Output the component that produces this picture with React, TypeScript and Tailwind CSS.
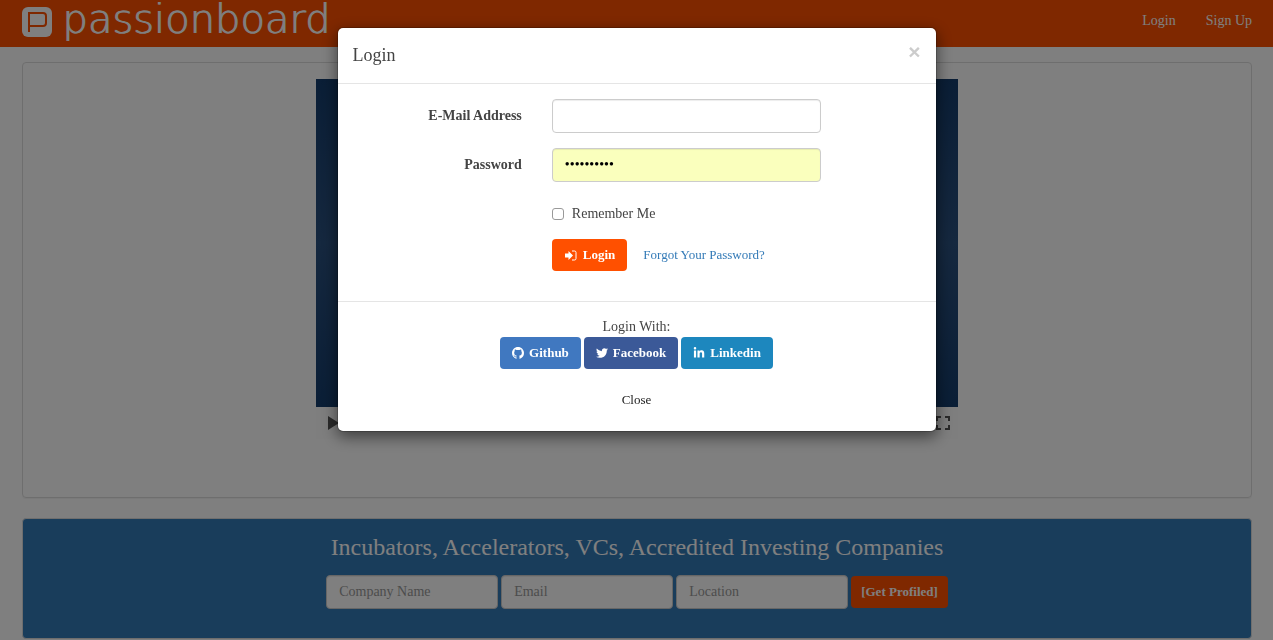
import { useState } from "react";
import { BsGithub } from "react-icons/bs";
import { FaTwitter, FaLinkedinIn } from "react-icons/fa";

const socials = [
  { name: "Github", color: "bg-[#4078c0]", icon: BsGithub },
  { name: "Facebook", color: "bg-[#3b5998]", icon: FaTwitter },
  { name: "Linkedin", color: "bg-[#1d87be]", icon: FaLinkedinIn },
];

const profileFields = ["Company Name", "Email", "Location"];

const button = "h-8 rounded-sm text-[13px] font-bold text-white";
const field = "h-[34px] rounded border border-[#ccc] px-3 text-sm shadow-[inset_0_1px_1px_rgba(0,0,0,0.075)]";

function Logo() {
  return (
    <a href="#" className="flex items-start gap-[10px] text-white">
      <svg className="mt-[7px] size-[30px]" viewBox="0 0 30 30" aria-hidden="true">
        <rect width="30" height="30" rx="6" fill="currentColor" />
        <path d="M7 25V6h14q3 0 3 3v7q0 3-3 3H7" fill="none" stroke="#ff5000" strokeWidth="2" />
      </svg>
      <span className="font-['DejaVu_Sans',sans-serif] text-[40px] font-extralight leading-[38px] [text-shadow:1px_0_0_currentColor]">
        passionboard
      </span>
    </a>
  );
}

function Navbar() {
  return (
    <nav className="flex h-[47px] items-start justify-between bg-[#ff5000] pr-[21px] pl-[22px]">
      <Logo />
      <div className="flex gap-[30px] py-[11px] text-sm text-white">
        <a href="#login">Login</a>
        <a href="#signup">Sign Up</a>
      </div>
    </nav>
  );
}

function Video() {
  return (
    <div className="mx-auto max-w-[642px]">
      <div className="h-[328px] bg-linear-to-b from-[#143c6c] via-[#2a507e] to-[#143c6c]" />
      <div className="flex h-8 items-center justify-between bg-[#fcfcfc] px-2 text-[#555]">
        <button type="button" aria-label="Play" className="px-1">
          <svg className="h-[14px] w-[11px]" viewBox="0 0 11 14" fill="currentColor">
            <path d="M0 0l11 7-11 7z" />
          </svg>
        </button>
        <button type="button" aria-label="Fullscreen">
          <svg className="size-[14px]" viewBox="0 0 14 14" fill="none" stroke="currentColor" strokeWidth="2">
            <path d="M1 5V1h4M9 1h4v4M13 9v4H9M5 13H1V9" />
          </svg>
        </button>
      </div>
    </div>
  );
}

function InvestorForm() {
  return (
    <section className="h-[121px] rounded border border-[#ddd] bg-[#337ab7] px-4 pt-[14px] text-center">
      <h3 className="mb-[14px] text-2xl leading-7 text-white">
        Incubators, Accelerators, VCs, Accredited Investing Companies
      </h3>
      <form className="flex items-center justify-center gap-[3px]" onSubmit={(e) => e.preventDefault()}>
        {profileFields.map((name) => (
          <input
            key={name}
            aria-label={name}
            placeholder={name}
            className={`${field} w-[172px] bg-white placeholder:text-[#999]`}
          />
        ))}
        <button className={`${button} bg-[#ff5000] px-[10px]`}>[Get Profiled]</button>
      </form>
    </section>
  );
}

function LoginModal({ onClose }: { onClose: () => void }) {
  return (
    <div className="fixed inset-0 overflow-y-auto bg-black/50">
      <div
        role="dialog"
        aria-labelledby="login-title"
        className="mx-auto mt-[27px] max-w-[600px] rounded-md border border-black/20 bg-white bg-clip-padding shadow-[0_5px_15px_rgba(0,0,0,0.5)]"
      >
        <header className="flex items-start justify-between border-b border-[#e5e5e5] p-[15px]">
          <h4 id="login-title" className="text-lg leading-[25px]">Login</h4>
          <button
            type="button"
            aria-label="Close dialog"
            onClick={onClose}
            className="font-['Liberation_Sans',sans-serif] text-[21px] font-bold leading-[18px] text-[#ccc]"
          >
            ×
          </button>
        </header>

        <form className="space-y-[15px] pt-[15px] pb-[30px]" onSubmit={(e) => e.preventDefault()}>
          <div className="flex">
            <label htmlFor="email" className="w-1/3 px-[15px] pt-[7px] text-right font-bold">E-Mail Address</label>
            <div className="w-1/2 px-[15px]">
              <input id="email" type="email" className={`${field} block w-full bg-white`} />
            </div>
          </div>
          <div className="flex">
            <label htmlFor="password" className="w-1/3 px-[15px] pt-[7px] text-right font-bold">Password</label>
            <div className="w-1/2 px-[15px]">
              <input
                id="password"
                type="password"
                defaultValue="passionate"
                className={`${field} block w-full bg-[#faffbd] text-black`}
              />
            </div>
          </div>
          <div className="ml-[33.333%] px-[15px] pt-[7px]">
            <label className="flex items-center gap-2">
              <input type="checkbox" className="size-3 appearance-none rounded-[3px] border border-[#999] bg-white checked:appearance-auto" />
              Remember Me
            </label>
          </div>
          <div className="ml-[33.333%] flex items-center gap-4 px-[15px]">
            <button className={`${button} flex items-center gap-[6px] bg-[#ff5000] px-3`}>
              <svg className="size-[13px]" viewBox="0 0 13 13" aria-hidden="true">
                <path d="M1 4.500h3.500V2L9 6.500 4.500 11V8.500H1z" fill="currentColor" />
                <path d="M8 2h2.500q1.500 0 1.500 1.500v6q0 1.500-1.500 1.500H8" fill="none" stroke="currentColor" />
              </svg>
              Login
            </button>
            <a href="#forgot" className="text-[13px] text-[#337ab7]">Forgot Your Password?</a>
          </div>
        </form>

        <footer className="border-t border-[#e5e5e5] p-[15px] text-center">
          <p>Login With:</p>
          <div className="mb-[15px] flex justify-center gap-[3px]">
            {socials.map(({ name, color, icon: Icon }) => (
              <button key={name} type="button" className={`${button} ${color} flex items-center gap-[5px] px-3`}>
                <Icon className="size-3" />
                {name}
              </button>
            ))}
          </div>
          <button type="button" onClick={onClose} className="h-8 px-3 text-[13px] text-[#222]">Close</button>
        </footer>
      </div>
    </div>
  );
}

export default function App() {
  const [open, setOpen] = useState(true);

  return (
    <div className="min-h-screen bg-white font-['Liberation_Serif',serif] text-sm text-[#444]">
      <Navbar />
      <main className="space-y-5 pt-[15px] pr-[21px] pl-[22px]">
        <section className="rounded border border-[#ddd] px-4 pt-4 pb-[58px] shadow-[0_1px_1px_rgba(0,0,0,0.05)]">
          <Video />
        </section>
        <InvestorForm />
      </main>
      {open && <LoginModal onClose={() => setOpen(false)} />}
    </div>
  );
}
